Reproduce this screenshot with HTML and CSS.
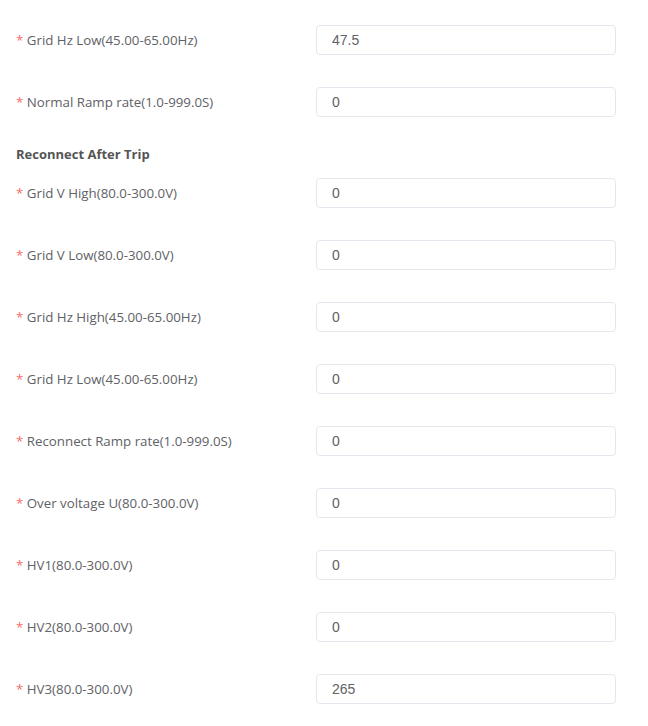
FILE: index.html
```html
<!DOCTYPE html>
<html lang="en">
<head>
  <meta charset="UTF-8" />
  <title>Grid Settings</title>
  <link rel="stylesheet" href="styles.css">
</head>
<body>
  <div class="settings-form">
    <div class="form-item">
      <label class="form-label"><span class="required">*</span> Grid Hz Low(45.00-65.00Hz)</label>
      <input class="form-input" type="text" value="47.5">
    </div>
    <div class="form-item">
      <label class="form-label"><span class="required">*</span> Normal Ramp rate(1.0-999.0S)</label>
      <input class="form-input" type="text" value="0">
    </div>

    <div class="section-title">Reconnect After Trip</div>

    <div class="form-item">
      <label class="form-label"><span class="required">*</span> Grid V High(80.0-300.0V)</label>
      <input class="form-input" type="text" value="0">
    </div>
    <div class="form-item">
      <label class="form-label"><span class="required">*</span> Grid V Low(80.0-300.0V)</label>
      <input class="form-input" type="text" value="0">
    </div>
    <div class="form-item">
      <label class="form-label"><span class="required">*</span> Grid Hz High(45.00-65.00Hz)</label>
      <input class="form-input" type="text" value="0">
    </div>
    <div class="form-item">
      <label class="form-label"><span class="required">*</span> Grid Hz Low(45.00-65.00Hz)</label>
      <input class="form-input" type="text" value="0">
    </div>
    <div class="form-item">
      <label class="form-label"><span class="required">*</span> Reconnect Ramp rate(1.0-999.0S)</label>
      <input class="form-input" type="text" value="0">
    </div>
    <div class="form-item">
      <label class="form-label"><span class="required">*</span> Over voltage U(80.0-300.0V)</label>
      <input class="form-input" type="text" value="0">
    </div>
    <div class="form-item">
      <label class="form-label"><span class="required">*</span> HV1(80.0-300.0V)</label>
      <input class="form-input" type="text" value="0">
    </div>
    <div class="form-item">
      <label class="form-label"><span class="required">*</span> HV2(80.0-300.0V)</label>
      <input class="form-input" type="text" value="0">
    </div>
    <div class="form-item">
      <label class="form-label"><span class="required">*</span> HV3(80.0-300.0V)</label>
      <input class="form-input" type="text" value="265">
    </div>
  </div>
</body>
</html>
```

FILE: styles.css
```css
body {
  margin: 0;
  background: #fff;
  font-family: "Open Sans", "Noto Sans", sans-serif;
}

.settings-form {
  padding: 25px 16px;
}

.form-item {
  display: flex;
  align-items: center;
  height: 30px;
  margin-bottom: 32px;
}

.form-label {
  width: 300px;
  flex-shrink: 0;
  font-size: 13.3px;
  color: #606266;
}

.required {
  color: #f56c6c;
}

.form-input {
  width: 300px;
  height: 30px;
  box-sizing: border-box;
  padding: 0 15px;
  border: 1px solid #e4e7ed;
  border-radius: 4px;
  font-family: "Liberation Sans", Arial, sans-serif;
  font-size: 14px;
  color: #606266;
  outline: none;
}

.section-title {
  margin: -5px 0 14px;
  line-height: 20px;
  font-size: 13px;
  font-weight: bold;
  color: #555;
}
```
